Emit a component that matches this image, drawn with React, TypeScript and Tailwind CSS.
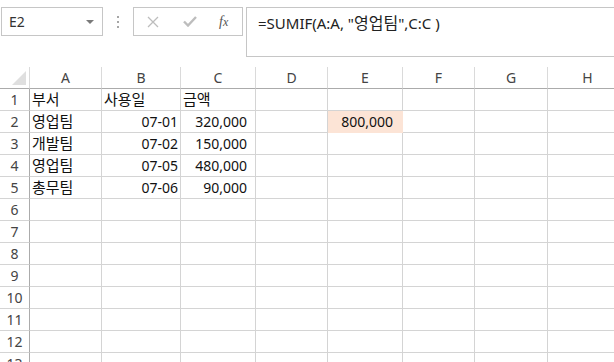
import React from "react";

const cols = ["A", "B", "C", "D", "E", "F", "G", "H"];

type Cell = { t: string; align?: "l" | "r"; pr?: number; fill?: boolean; ko?: boolean };
const data: Record<number, Record<string, Cell>> = {
  1: { A: { t: "부서", ko: true }, B: { t: "사용일", ko: true }, C: { t: "금액", ko: true } },
  2: { A: { t: "영업팀", ko: true }, B: { t: "07-01", align: "r" }, C: { t: "320,000", align: "r", pr: 8 }, E: { t: "800,000", align: "r", pr: 9, fill: true } },
  3: { A: { t: "개발팀", ko: true }, B: { t: "07-02", align: "r" }, C: { t: "150,000", align: "r", pr: 8 } },
  4: { A: { t: "영업팀", ko: true }, B: { t: "07-05", align: "r" }, C: { t: "480,000", align: "r", pr: 8 } },
  5: { A: { t: "총무팀", ko: true }, B: { t: "07-06", align: "r" }, C: { t: "90,000", align: "r", pr: 8 } },
};

const font = { fontFamily: '"Noto Sans", "Noto Sans CJK KR", sans-serif' };

export default function App() {
  const rows = Array.from({ length: 13 }, (_, i) => i + 1);
  return (
    <div className="w-[614px] h-[362px] overflow-hidden bg-white text-[#222]" style={font}>
      {/* toolbar */}
      <div className="flex items-start pt-[7px] h-[67px]">
        <div className="ml-[1px] w-[102px] h-[29px] border border-[#c6c6c6] flex items-center justify-between pl-[7px] pr-[8px]">
          <span className="text-[14px] text-[#333] leading-none">E2</span>
          <svg width="8" height="4" viewBox="0 0 8 4"><path d="M0 0 L8 0 L4 4 Z" fill="#7a7a7a" /></svg>
        </div>
        <div className="w-[30px] h-[29px] flex flex-col items-center justify-center gap-[3px]">
          <div className="w-[2px] h-[2px] bg-[#a6a6a6]" />
          <div className="w-[2px] h-[2px] bg-[#a6a6a6]" />
          <div className="w-[2px] h-[2px] bg-[#a6a6a6]" />
        </div>
        <div className="w-[110px] h-[29px] border border-[#c6c6c6] flex items-center pl-[13px]">
          <svg width="12" height="12" viewBox="0 0 12 12"><path d="M1 1 L11 11 M11 1 L1 11" stroke="#bdbdbd" strokeWidth="1.3" /></svg>
          <svg className="ml-[24px]" width="14" height="11" viewBox="0 0 14 11"><path d="M1 5.5 L5 9.5 L13 1" stroke="#bdbdbd" strokeWidth="2.4" fill="none" /></svg>
          <span className="ml-[22px] text-[14px] italic text-[#555] leading-none" style={{ fontFamily: '"Liberation Serif", serif' }}>
            f<span className="text-[12px]">x</span>
          </span>
        </div>
        <div className="ml-[3px] flex-1 h-[50px] border border-r-0 border-[#c6c6c6] pl-[11px] pt-[3px]">
          <span className="text-[15px] text-[#222]">
            =SUMIF(A:A, "<span className="text-[16px]">영업팀</span>",C:C )
          </span>
        </div>
      </div>
      {/* grid */}
      <div className="grid grid-cols-[30px_72px_79px_75px_72px_75px_72px_73px_80px] auto-rows-[22px]">
        <div className="border-r border-b border-[#ababab] border-r-[#dadada] relative">
          <svg className="absolute right-[3px] bottom-[3px]" width="14" height="14" viewBox="0 0 14 14"><path d="M14 0 L14 14 L0 14 Z" fill="#dfdfdf" /></svg>
        </div>
        {cols.map((c) => (
          <div key={c} className="border-r border-r-[#dadada] border-b border-b-[#ababab] flex items-center justify-center text-[14px] text-[#444]">
            {c}
          </div>
        ))}
        {rows.map((r) => (
          <React.Fragment key={r}>
            <div className="border-r border-r-[#ababab] border-b border-b-[#d4d4d4] flex items-center justify-center text-[14px] text-[#444]">
              {r}
            </div>
            {cols.map((c) => {
              const cell = data[r]?.[c];
              return (
                <div
                  key={c}
                  className={
                    "border-r border-b flex items-center text-[#111] whitespace-nowrap " +
                    (cell?.ko ? "text-[15px] " : "text-[14px] ") +
                    (cell?.fill ? "bg-[#fce4d6] border-[#fce4d6] " : "border-[#d4d4d4] ") +
                    (cell?.align === "r" ? "justify-end" : "justify-start pl-[2px]")
                  }
                  style={cell?.align === "r" ? { paddingRight: cell.pr ?? 2 } : undefined}
                >
                  {cell?.t}
                </div>
              );
            })}
          </React.Fragment>
        ))}
      </div>
    </div>
  );
}
